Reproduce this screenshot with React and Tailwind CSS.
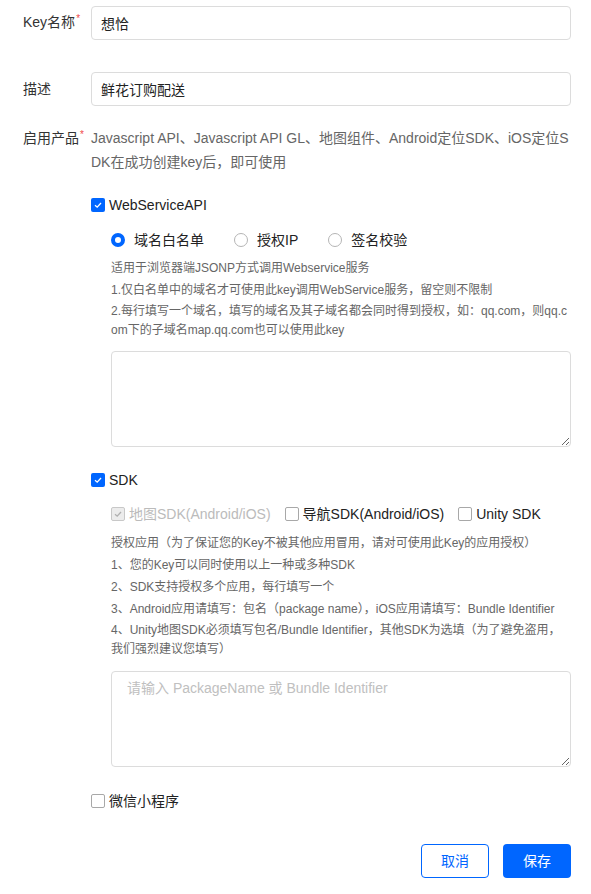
import React, { useState } from 'react';

const BLUE = '#0066ff';

const Check = ({ checked, disabled, onClick }) => {
  if (disabled) {
    return (
      <span className="flex h-[14px] w-[14px] shrink-0 items-center justify-center rounded-[2px] border border-[#c8c8c8] bg-[#ececec]">
        <svg width="10" height="10" viewBox="0 0 10 10">
          <path d="M2 5.2 L4.2 7.2 L8 3" fill="none" stroke="#b0b0b0" strokeWidth="1.3" />
        </svg>
      </span>
    );
  }
  return checked ? (
    <span onClick={onClick} className="flex h-[14px] w-[14px] shrink-0 items-center justify-center rounded-[2px] bg-[#0066ff]">
      <svg width="10" height="10" viewBox="0 0 10 10">
        <path d="M2 5.2 L4.2 7.2 L8 3" fill="none" stroke="#fff" strokeWidth="1.3" />
      </svg>
    </span>
  ) : (
    <span onClick={onClick} className="h-[14px] w-[14px] shrink-0 rounded-[2px] border border-[#a8a8a8] bg-white" />
  );
};

const Radio = ({ checked, label, onClick }) => (
  <div className="flex cursor-pointer items-center gap-[9px]" onClick={onClick}>
    {checked ? (
      <span className="h-[14px] w-[14px] rounded-full border-[4px] border-[#0066ff] bg-white" />
    ) : (
      <span className="h-[14px] w-[14px] rounded-full border border-[#b5b5b5] bg-white" />
    )}
    <span className="text-[14px] text-[#222]">{label}</span>
  </div>
);

const Label = ({ children, required }) => (
  <div className="w-[68px] shrink-0 text-[14px] leading-[24px] text-[#333]">
    {children}
    {required && <span className="relative -top-[5px] ml-[1px] text-[10px] text-[#f04a4a]">*</span>}
  </div>
);

export default function App() {
  const [mode, setMode] = useState('domain');
  const [ws, setWs] = useState(true);
  const [sdk, setSdk] = useState(true);
  const [nav, setNav] = useState(false);
  const [unity, setUnity] = useState(false);
  const [wx, setWx] = useState(false);

  return (
    <div
      className="min-h-[894px] bg-white pl-[23px] pr-[20px] pt-[6px]"
      style={{ fontFamily: '"Liberation Sans", "Noto Sans CJK SC", sans-serif' }}
    >
      <div className="flex items-center">
        <Label required>Key名称</Label>
        <input
          defaultValue="想恰"
          className="h-[34px] flex-1 rounded-[4px] border border-[#dcdcdc] px-[9px] text-[14px] text-[#222] outline-none"
        />
      </div>

      <div className="mt-[32px] flex items-center">
        <Label>描述</Label>
        <input
          defaultValue="鲜花订购配送"
          className="h-[34px] flex-1 rounded-[4px] border border-[#dcdcdc] px-[9px] text-[14px] text-[#222] outline-none"
        />
      </div>

      <div className="mt-[20px] flex">
        <Label required>启用产品</Label>
        <div className="flex-1">
          <div className="text-[14px] leading-[24px] text-[#666]">
            <div className="whitespace-nowrap">Javascript API、Javascript API GL、地图组件、Android定位SDK、iOS定位S</div>
            <div className="whitespace-nowrap">DK在成功创建key后，即可使用</div>
          </div>

          <div className="mt-[21px] flex h-[20px] items-center gap-[4px]">
            <Check checked={ws} onClick={() => setWs(!ws)} />
            <span className="text-[14px] text-[#222]">WebServiceAPI</span>
          </div>

          <div className="pl-[20px]">
            <div className="mt-[15px] flex h-[20px] items-center gap-[30px]">
              <Radio checked={mode === 'domain'} label="域名白名单" onClick={() => setMode('domain')} />
              <Radio checked={mode === 'ip'} label="授权IP" onClick={() => setMode('ip')} />
              <Radio checked={mode === 'sign'} label="签名校验" onClick={() => setMode('sign')} />
            </div>

            <div className="mt-[8px] text-[12px] leading-[20px] text-[#666]">
              <p>适用于浏览器端JSONP方式调用Webservice服务</p>
              <p className="mt-[2px]">1.仅白名单中的域名才可使用此key调用WebService服务，留空则不限制</p>
              <div className="mt-[2px] leading-[19px]">
                <p className="whitespace-nowrap">2.每行填写一个域名，填写的域名及其子域名都会同时得到授权，如：qq.com，则qq.c</p>
                <p className="whitespace-nowrap">om下的子域名map.qq.com也可以使用此key</p>
              </div>
            </div>

            <textarea className="mt-[11px] block h-[96px] w-full rounded-[4px] border border-[#dcdcdc] px-[14px] py-[8px] text-[14px] outline-none" />
          </div>

          <div className="mt-[23px] flex h-[20px] items-center gap-[4px]">
            <Check checked={sdk} onClick={() => setSdk(!sdk)} />
            <span className="text-[14px] text-[#222]">SDK</span>
          </div>

          <div className="pl-[20px]">
            <div className="mt-[14px] flex h-[20px] items-center gap-[14px]">
              <div className="flex items-center gap-[4px]">
                <Check checked disabled />
                <span className="text-[14px] text-[#bbb]">地图SDK(Android/iOS)</span>
              </div>
              <div className="flex items-center gap-[4px]">
                <Check checked={nav} onClick={() => setNav(!nav)} />
                <span className="text-[14px] text-[#222]">导航SDK(Android/iOS)</span>
              </div>
              <div className="flex items-center gap-[4px]">
                <Check checked={unity} onClick={() => setUnity(!unity)} />
                <span className="text-[14px] text-[#222]">Unity SDK</span>
              </div>
            </div>

            <div className="mt-[9px] text-[12px] leading-[20px] text-[#666]">
              <p className="whitespace-nowrap">授权应用（为了保证您的Key不被其他应用冒用，请对可使用此Key的应用授权）</p>
              <p className="mt-[2px]">1、您的Key可以同时使用以上一种或多种SDK</p>
              <p className="mt-[2px]">2、SDK支持授权多个应用，每行填写一个</p>
              <p className="mt-[2px] whitespace-nowrap">3、Android应用请填写：包名（package name），iOS应用请填写：Bundle Identifier</p>
              <div className="mt-[2px] leading-[19px]">
                <p className="whitespace-nowrap">4、Unity地图SDK必须填写包名/Bundle Identifier，其他SDK为选填（为了避免盗用，</p>
                <p className="whitespace-nowrap">我们强烈建议您填写）</p>
              </div>
            </div>

            <textarea
              placeholder="请输入 PackageName 或 Bundle Identifier"
              className="mt-[12px] block h-[96px] w-full rounded-[4px] border border-[#dcdcdc] px-[15px] py-[6px] text-[14px] leading-[20px] outline-none placeholder:text-[#c0c0c0]"
            />
          </div>

          <div className="mt-[24px] flex h-[20px] items-center gap-[4px]">
            <Check checked={wx} onClick={() => setWx(!wx)} />
            <span className="text-[14px] text-[#222]">微信小程序</span>
          </div>

          <div className="mt-[33px] flex justify-end gap-[14px]">
            <button className="h-[34px] w-[68px] rounded-[4px] border border-[#0066ff] bg-white text-[14px] text-[#0066ff]">
              取消
            </button>
            <button className="h-[34px] w-[68px] rounded-[4px] bg-[#0066ff] text-[14px] text-white">
              保存
            </button>
          </div>
        </div>
      </div>
    </div>
  );
}
